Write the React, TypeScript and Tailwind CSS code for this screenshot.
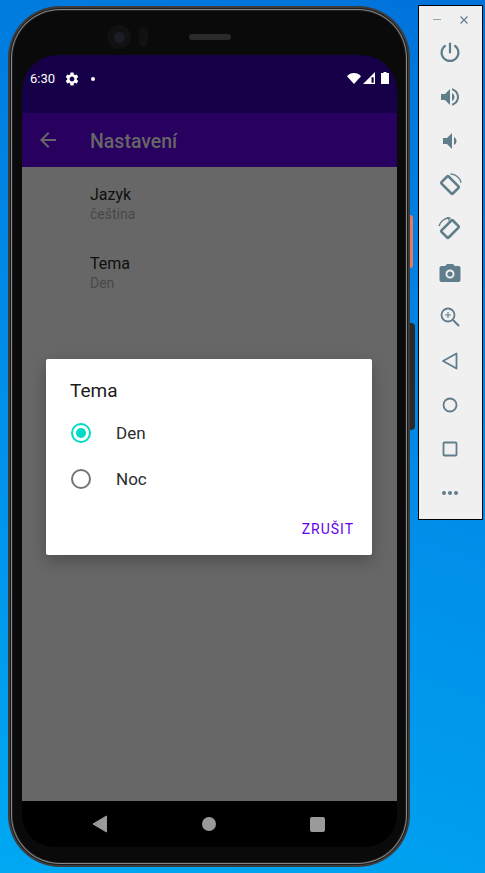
const font = { fontFamily: "Roboto, sans-serif" };

function ToolIcon({ children, size = 24 }: { children: React.ReactNode; size?: number }) {
  return (
    <div className="flex h-[44px] items-center justify-center pr-px">
      <svg width={size} height={size} viewBox="0 0 24 24" fill="#607d8b" className="overflow-visible">
        {children}
      </svg>
    </div>
  );
}

function Toolbar() {
  return (
    <div className="absolute left-[418px] top-[5px] flex h-[515px] w-[65px] flex-col border border-black bg-[#f0f0f0]">
      <div className="flex h-[25px] shrink-0 items-center justify-between pl-[14px] pr-[13px] pt-[2px]">
        <div className="h-px w-[8px] bg-[#90a4ae]" />
        <svg width="10" height="10" viewBox="0 0 10 10" stroke="#607d8b" strokeWidth="1.2">
          <path d="M1.5 1.5l7 7M8.5 1.5l-7 7" />
        </svg>
      </div>
      <ToolIcon>
        <path d="M12 2.5v9" stroke="#607d8b" strokeWidth="2.2" fill="none" strokeLinecap="round" />
        <path d="M7 4.8a8.4 8.4 0 1 0 10 0" stroke="#607d8b" strokeWidth="2.2" fill="none" strokeLinecap="round" />
      </ToolIcon>
      <ToolIcon>
        <path d="M3 9v6h4l5 5V4L7 9H3zm13.5 3c0-1.77-1.02-3.29-2.5-4.03v8.05c1.48-.73 2.5-2.25 2.5-4.02zM14 3.23v2.06c2.89.86 5 3.54 5 6.71s-2.11 5.85-5 6.71v2.06c4.01-.91 7-4.49 7-8.77s-2.99-7.86-7-8.77z" />
      </ToolIcon>
      <ToolIcon>
        <path d="M18.5 12c0-1.77-1.02-3.29-2.5-4.03v8.05c1.48-.73 2.5-2.25 2.5-4.02zM5 9v6h4l5 5V4L9 9H5z" />
      </ToolIcon>
      <ToolIcon>
        <g fill="none" stroke="#607d8b">
          <rect x="7" y="4" width="10" height="16" rx="1" strokeWidth="2.6" transform="rotate(-45 12 12)" />
          <path d="M12.5 1a11 11 0 0 1 10.6 8.6" strokeWidth="1.4" />
        </g>
      </ToolIcon>
      <ToolIcon>
        <g fill="none" stroke="#607d8b">
          <rect x="7" y="4" width="10" height="16" rx="1" strokeWidth="2.6" transform="rotate(45 12 12)" />
          <path d="M1 9a11 11 0 0 1 10.5-8" strokeWidth="1.4" />
          <path d="M9 .5l3 .6-1.8 2.4" strokeWidth="1.2" />
        </g>
      </ToolIcon>
      <ToolIcon>
        <path d="M9 3L7.17 5H3.5c-1.1 0-2 .9-2 2v12c0 1.1.9 2 2 2h17c1.1 0 2-.9 2-2V7c0-1.1-.9-2-2-2h-3.67L15 3H9zm3 14.5a4.5 4.5 0 1 1 0-9 4.5 4.5 0 0 1 0 9z" />
        <circle cx="12" cy="13" r="2.6" />
      </ToolIcon>
      <ToolIcon>
        <g fill="none" stroke="#607d8b">
          <circle cx="10" cy="10" r="6.5" strokeWidth="1.8" />
          <path d="M15 15l6 6" strokeWidth="2" />
          <path d="M10 7v6M7 10h6" strokeWidth="1.1" />
        </g>
      </ToolIcon>
      <ToolIcon>
        <path d="M18.5 4.5v15L5 12z" fill="none" stroke="#607d8b" strokeWidth="1.8" strokeLinejoin="round" />
      </ToolIcon>
      <ToolIcon>
        <circle cx="12" cy="12" r="6.5" fill="none" stroke="#607d8b" strokeWidth="1.8" />
      </ToolIcon>
      <ToolIcon>
        <rect x="5.5" y="5.5" width="13" height="13" rx="1" fill="none" stroke="#607d8b" strokeWidth="1.8" />
      </ToolIcon>
      <ToolIcon>
        <circle cx="6" cy="12" r="2" />
        <circle cx="12" cy="12" r="2" />
        <circle cx="18" cy="12" r="2" />
      </ToolIcon>
    </div>
  );
}

function StatusBar() {
  return (
    <div className="flex h-[58px] shrink-0 items-start bg-[#160048] pl-[8px] pr-[8px] pt-[15px] text-white">
      <span className="w-[34px] text-[13px] leading-[18px]">6:30</span>
      <svg width="16" height="16" viewBox="0 0 24 24" fill="#fff" className="mt-px">
        <path d="M19.14 12.94c.04-.3.06-.61.06-.94 0-.32-.02-.64-.07-.94l2.03-1.58a.49.49 0 0 0 .12-.61l-1.92-3.32a.488.488 0 0 0-.59-.22l-2.39.96c-.5-.38-1.03-.7-1.62-.94l-.36-2.54a.484.484 0 0 0-.48-.41h-3.84c-.24 0-.43.17-.47.41l-.36 2.54c-.59.24-1.13.57-1.62.94l-2.39-.96c-.22-.08-.47 0-.59.22L2.74 8.87c-.12.21-.08.47.12.61l2.03 1.58c-.05.3-.09.63-.09.94s.02.64.07.94l-2.03 1.58a.49.49 0 0 0-.12.61l1.92 3.32c.12.22.37.29.59.22l2.39-.96c.5.38 1.03.7 1.62.94l.36 2.54c.05.24.24.41.48.41h3.84c.24 0 .44-.17.47-.41l.36-2.54c.59-.24 1.13-.56 1.62-.94l2.39.96c.22.08.47 0 .59-.22l1.92-3.32c.12-.22.07-.47-.12-.61l-2.01-1.58zM12 15.6c-1.98 0-3.6-1.62-3.6-3.6s1.62-3.6 3.6-3.6 3.6 1.62 3.6 3.6-1.62 3.6-3.6 3.6z" />
      </svg>
      <div className="ml-[11px] mt-[7px] h-[4px] w-[4px] rounded-full bg-white" />
      <div className="ml-auto mt-[2px] flex items-center gap-[2px]">
        <svg width="14" height="11" viewBox="0 0 14 11" fill="#fff">
          <path d="M0 3.2C1.8 1.2 4.3 0 7 0s5.2 1.2 7 3.2L7 11z" />
        </svg>
        <svg width="12" height="12" viewBox="0 0 12 12" fill="none">
          <path d="M0 12L12 0v12z" fill="#fff" />
          <path d="M8.5 5.2h2.2v5.6H8.5z" fill="#160048" />
        </svg>
        <svg width="8" height="12" viewBox="0 0 8 12" fill="#fff" className="ml-[4px]">
          <path d="M2.5 0h3v1H8v11H0V1h2.5z" />
        </svg>
      </div>
    </div>
  );
}

function AppBar() {
  return (
    <div className="flex h-[54px] shrink-0 items-center bg-[#270060]">
      <svg width="24" height="24" viewBox="0 0 24 24" fill="#666666" className="mb-px ml-[14px]">
        <path d="M20 11H7.83l5.59-5.59L12 4l-8 8 8 8 1.41-1.41L7.83 13H20v-2z" />
      </svg>
      <span className="ml-[30px] mt-[3px] text-[19.5px] font-medium leading-[24px] text-[#666666]">Nastavení</span>
    </div>
  );
}

function SettingRow({ title, value }: { title: string; value: string }) {
  return (
    <div className="h-[69px]">
      <div className="text-[16px] leading-[19px] text-[#0f0f0f]">{title}</div>
      <div className="text-[14px] leading-[20px] text-[#484848]">{value}</div>
    </div>
  );
}

function Radio({ checked }: { checked: boolean }) {
  return (
    <div
      className={
        checked
          ? "flex h-[20px] w-[20px] items-center justify-center rounded-full border-2 border-[#03dac5]"
          : "flex h-[20px] w-[20px] items-center justify-center rounded-full border-2 border-[#757575]"
      }
    >
      {checked && <div className="h-[10px] w-[10px] rounded-full bg-[#03dac5]" />}
    </div>
  );
}

function ThemeDialog() {
  return (
    <div className="absolute left-[24px] top-[304px] h-[196px] w-[326px] rounded-[2px] bg-white shadow-[0_6px_16px_rgba(0,0,0,0.25)]">
      <div className="pl-[24px] pt-[20px] text-[19px] leading-[24px] text-[#1c1c1c]">Tema</div>
      <div className="mt-[7px]">
        <div className="flex h-[46px] items-center pl-[25px]">
          <Radio checked />
          <span className="ml-[25px] mt-px text-[17px] text-[#2c2c2c]">Den</span>
        </div>
        <div className="flex h-[46px] items-center pl-[25px]">
          <Radio checked={false} />
          <span className="ml-[25px] mt-px text-[17px] text-[#2c2c2c]">Noc</span>
        </div>
      </div>
      <div className="mt-[9px] flex h-[36px] items-center justify-end pr-[18px] text-[14px] tracking-[1px] text-[#6200ee]">
        ZRUŠIT
      </div>
    </div>
  );
}

function NavBar() {
  return (
    <div className="flex h-[46px] shrink-0 items-center bg-black">
      <svg width="16" height="18" viewBox="0 0 16 18" fill="#9a9a9a" className="ml-[70px]">
        <path d="M14.5 1v16L1 9z" stroke="#9a9a9a" strokeLinejoin="round" />
      </svg>
      <div className="ml-[94px] h-[14px] w-[14px] rounded-full bg-[#9a9a9a]" />
      <div className="ml-[94px] h-[15px] w-[15px] rounded-[2px] bg-[#9a9a9a]" />
    </div>
  );
}

function Phone() {
  return (
    <div className="absolute left-[8px] top-[6px] h-[861px] w-[402px]">
      <div className="absolute left-[402px] top-[209px] h-[53px] w-[3px] rounded-r-sm bg-[#e8785c]" />
      <div className="absolute left-[402px] top-[317px] h-[107px] w-[5px] rounded-r-sm bg-[#2a2a2a]" />
      <div className="relative h-full w-full rounded-[52px] bg-[#3c3c3c] p-[2px]">
        <div className="h-full w-full rounded-[50px] bg-[#1c1c1c] p-px">
          <div className="h-full w-full rounded-[49px] bg-[#858585] p-px">
            <div className="h-full w-full rounded-[48px] bg-[#1e1e1e] p-px">
              <div className="flex h-full w-full flex-col rounded-[47px] bg-[#0a0a0a] pb-[15px] pl-[9px] pr-[8px] pt-[44px]">
                <div className="absolute left-[99px] top-[19px] flex h-[24px] w-[24px] items-center justify-center rounded-full bg-[#111111]">
                  <div className="h-[11px] w-[11px] rounded-full bg-[#1a1d26]" />
                </div>
                <div className="absolute left-[131px] top-[21px] h-[20px] w-[9px] rounded-full bg-[#111111]" />
                <div className="absolute left-[181px] top-[28px] h-[6px] w-[42px] rounded-full bg-[#2a2a2a]" />
                <div
                  className="relative flex min-h-0 flex-1 flex-col overflow-hidden rounded-b-[32px] rounded-t-[36px]"
                  style={font}
                >
                  <StatusBar />
                  <AppBar />
                  <div className="flex-1 bg-[#676767] pl-[68px] pt-[18px]">
                    <SettingRow title="Jazyk" value="čeština" />
                    <SettingRow title="Tema" value="Den" />
                  </div>
                  <NavBar />
                  <ThemeDialog />
                </div>
              </div>
            </div>
          </div>
        </div>
      </div>
    </div>
  );
}

export default function App() {
  return (
    <div className="relative h-[873px] w-[485px] overflow-hidden bg-[linear-gradient(200deg,#0072d9_0%,#008ae8_45%,#00a8f2_100%)]">
      <Phone />
      <Toolbar />
    </div>
  );
}
